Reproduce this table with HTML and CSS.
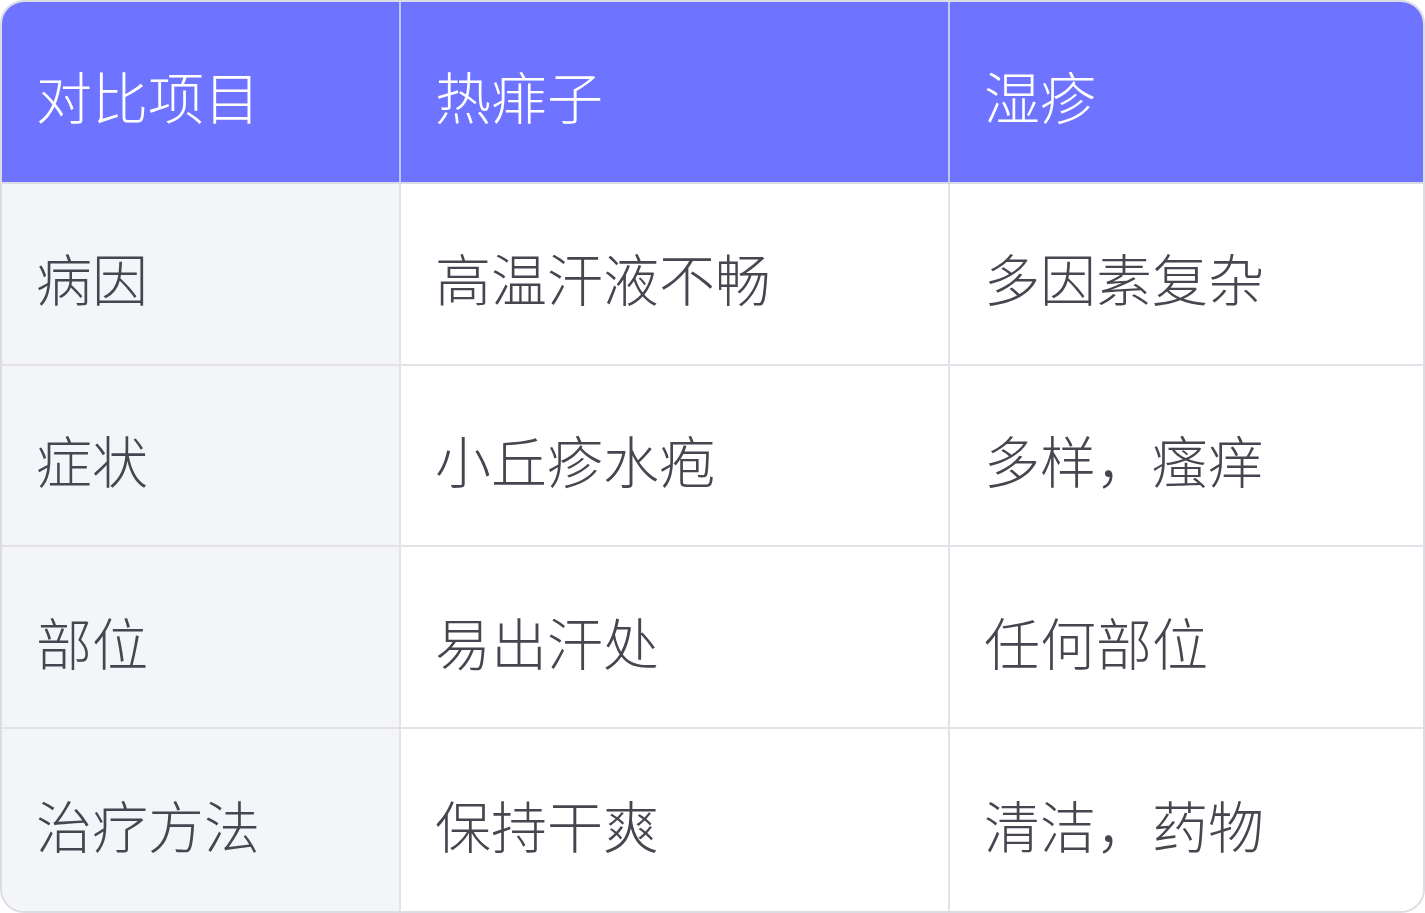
FILE: index.html
```html
<!DOCTYPE html>
<html lang="zh">
<head>
<meta charset="utf-8">
<link rel="stylesheet" href="styles.css">
</head>
<body>
<div class="table">
  <div class="cell head">对比项目</div>
  <div class="cell head">热痱子</div>
  <div class="cell head last">湿疹</div>

  <div class="cell label">病因</div>
  <div class="cell">高温汗液不畅</div>
  <div class="cell last">多因素复杂</div>

  <div class="cell label">症状</div>
  <div class="cell">小丘疹水疱</div>
  <div class="cell last">多样，瘙痒</div>

  <div class="cell label">部位</div>
  <div class="cell">易出汗处</div>
  <div class="cell last">任何部位</div>

  <div class="cell label bottom">治疗方法</div>
  <div class="cell bottom">保持干爽</div>
  <div class="cell last bottom">清洁，药物</div>
</div>
</body>
</html>
```

FILE: styles.css
```css
html, body {
  margin: 0;
  padding: 0;
  background: #ffffff;
}
body {
  width: 1425px;
  height: 913px;
  font-family: "Noto Sans CJK SC", "Noto Sans", sans-serif;
}
.table {
  box-sizing: border-box;
  width: 1425px;
  height: 913px;
  border: 2px solid #dcdce3;
  border-radius: 24px;
  overflow: hidden;
  display: grid;
  grid-template-columns: 399px 549px 1fr;
  grid-template-rows: repeat(5, 1fr);
}
.cell {
  display: flex;
  align-items: center;
  padding-left: 34px;
  padding-top: 6px;
  font-size: 56px;
  color: #45464f;
  background: #ffffff;
  border-right: 2px solid #e2e2e8;
  border-bottom: 2px solid #e2e2e8;
  font-weight: 300;
}
.cell.last { border-right: none; }
.cell.bottom { border-bottom: none; }
.cell.head {
  background: #6e74ff;
  color: #ffffff;
  border-right-color: #c3c5fb;
  border-bottom-color: #dcdce3;
}
.cell.label { background: #f4f5f9; }
```
